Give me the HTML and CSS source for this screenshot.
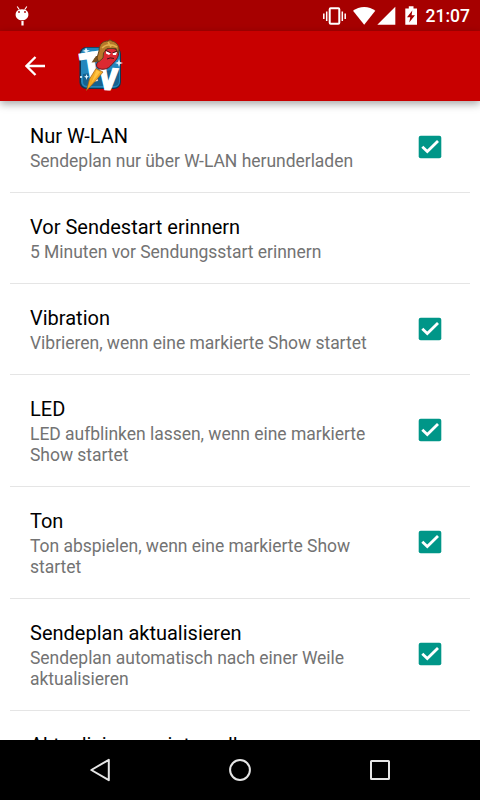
FILE: index.html
```html
<!DOCTYPE html>
<html lang="de">

<head>
    <meta charset="UTF-8">
    <meta name="viewport" content="width=device-width, initial-scale=1.0">
    <title>Einstellungen</title>
    <link rel="stylesheet" href="styles.css">
</head>

<body>
    <div class="statusbar">
        <svg class="debug" width="14" height="20" viewBox="0 0 14 20">
            <path d="M2.2 0.5 L4.4 3.8 M11.8 0.5 L9.6 3.8" stroke="#fff" stroke-width="1.1" />
            <path d="M1 6.5 C2.5 2.2 11.5 2.2 13 6.5 C14.6 11 11 14.2 7 14.2 C3 14.2 -0.6 11 1 6.5 Z" fill="#fff" />
            <circle cx="4" cy="6" r="0.9" fill="#a60000" />
            <circle cx="10" cy="6" r="0.9" fill="#a60000" />
            <path d="M7.5 15 V19.5" stroke="#fff" stroke-width="2.2" />
        </svg>
        <svg class="icons" width="96" height="20" viewBox="0 0 96 20">
            <!-- vibrate -->
            <rect x="6.7" y="2.2" width="9.6" height="15.6" rx="1" fill="none" stroke="#fff" stroke-width="2" />
            <path d="M3.7 5.5 V15 M0.8 7.5 V13 M19.3 5.5 V15 M22.2 7.5 V13" stroke="#fff" stroke-width="1.5" />
            <!-- wifi -->
            <path d="M30 4.8 C36 -0.3 46.5 -0.3 52.3 4.8 L41.2 18.8 Z" fill="#fff" />
            <!-- signal -->
            <path d="M72.3 0.7 V18.7 H54.3 Z" fill="#fff" />
            <!-- battery -->
            <path d="M82.3 2.5 H85.8 V0.3 H90.5 V2.5 H94 V18.7 H82.3 Z" fill="#fff" />
            <path d="M89.3 4.5 L84 11.3 H87.3 L86.2 16.5 L92 9.3 H88.6 Z" fill="#a60000" />
        </svg>
        <span class="clock">21:07</span>
    </div>

    <header class="toolbar">
        <svg class="back" width="20" height="20" viewBox="0 0 20 20">
            <path d="M20 10 H2 M10.5 1 L1.5 10 L10.5 19" fill="none" stroke="#fff" stroke-width="2.3" />
        </svg>
        <svg class="logo" width="46" height="54" viewBox="0 0 46 54">
            <rect x="1.4" y="8" width="41.6" height="42" rx="7" fill="#14344f" />
            <rect x="3" y="8.8" width="39" height="40" rx="6" fill="#2387bd" />
            <path d="M5 35 V43 Q5 47 10 47 H36 Q41 47 41 42 V30 Z" fill="#17628f" />
            <path d="M8 8.5 L9.2 11 L12 11.5 L9.2 12.7 L8.2 15.5 L7 12.7 L4.5 12 L7 11 Z M41 20 L42 23 L45 24 L42 25 L41 28 L40 25 L37 24 L40 23 Z M8.5 35 L9.2 37 L11 37.8 L9.2 38.6 L8.5 41 L7.8 38.6 L6 37.8 L7.8 37 Z" fill="#e4f6ff" />
            <circle cx="3" cy="38" r="1" fill="#fff" />
            <text class="letter" font-size="40" transform="translate(5 43.5) rotate(-9) scale(0.88 1)">T</text>
            <text class="letter" font-size="30" transform="translate(20.5 50) rotate(4) scale(0.92 1)">V</text>
            <!-- flame -->
            <path d="M18 29.5 L25 33 L17 42.5 L8.5 51.5 L11.5 40 Z" fill="#f5aa24" stroke="#9a5b18" stroke-width="0.7" />
            <path d="M18.5 31 L22 33 L13.5 44 Z" fill="#ffc444" />
            <!-- rocket sausage -->
            <path d="M19 23 L13.5 23.5 L18 17 L23 17 Z" fill="#76501f" />
            <path d="M25 12 C30 8 40.5 8 40.5 15 C40 20 36 23 32.5 27 C28 32 18.5 31 18.5 26 C19 22 24 20 25 12 Z" fill="#dc2932" stroke="#65171d" stroke-width="1" />
            <path d="M21 12 C21 4 26 2 30 2 L32 0.8 L34 2 C38 3 41 6 41 10 L40.5 15 L38 9.5 L29 9.5 L25.5 14 L25 19 L20.5 23 L19 19 Z" fill="#b8792a" stroke="#60421c" stroke-width="1" />
            <path d="M24 9 Q30 3 39 8 M30 3 L33 8" fill="none" stroke="#e0b14d" stroke-width="1.5" />
            <path d="M28 12 L33 14 L31 16 L28 14.5 Z M34.5 14 L39 13 L38 16 H35 Z" fill="#fff" />
            <path d="M27 11 L33 14 M34.5 14 L39 12 M29 20 Q32 18 36 19.5" fill="none" stroke="#441014" stroke-width="1" />
        </svg>
    </header>

    <main class="settings">
        <div class="item">
            <div class="text">
                <div class="title">Nur W-LAN</div>
                <div class="summary">Sendeplan nur über W-LAN herunderladen</div>
            </div>
            <svg class="check" viewBox="0 0 24 24"><rect class="box" x="0.7" y="0.7" width="22.6" height="22.6" rx="2" /><path class="tick" d="M4.3 11.8 L9.3 16.6 L20 6" /></svg>
        </div>
        <div class="item">
            <div class="text">
                <div class="title">Vor Sendestart erinnern</div>
                <div class="summary">5 Minuten vor Sendungsstart erinnern</div>
            </div>
        </div>
        <div class="item">
            <div class="text">
                <div class="title">Vibration</div>
                <div class="summary">Vibrieren, wenn eine markierte Show startet</div>
            </div>
            <svg class="check" viewBox="0 0 24 24"><rect class="box" x="0.7" y="0.7" width="22.6" height="22.6" rx="2" /><path class="tick" d="M4.3 11.8 L9.3 16.6 L20 6" /></svg>
        </div>
        <div class="item">
            <div class="text">
                <div class="title">LED</div>
                <div class="summary">LED aufblinken lassen, wenn eine markierte Show startet</div>
            </div>
            <svg class="check" viewBox="0 0 24 24"><rect class="box" x="0.7" y="0.7" width="22.6" height="22.6" rx="2" /><path class="tick" d="M4.3 11.8 L9.3 16.6 L20 6" /></svg>
        </div>
        <div class="item">
            <div class="text">
                <div class="title">Ton</div>
                <div class="summary">Ton abspielen, wenn eine markierte Show startet</div>
            </div>
            <svg class="check" viewBox="0 0 24 24"><rect class="box" x="0.7" y="0.7" width="22.6" height="22.6" rx="2" /><path class="tick" d="M4.3 11.8 L9.3 16.6 L20 6" /></svg>
        </div>
        <div class="item">
            <div class="text">
                <div class="title">Sendeplan aktualisieren</div>
                <div class="summary">Sendeplan automatisch nach einer Weile aktualisieren</div>
            </div>
            <svg class="check" viewBox="0 0 24 24"><rect class="box" x="0.7" y="0.7" width="22.6" height="22.6" rx="2" /><path class="tick" d="M4.3 11.8 L9.3 16.6 L20 6" /></svg>
        </div>
        <div class="item">
            <div class="text">
                <div class="title">Aktualisierungsintervall</div>
            </div>
        </div>
    </main>

    <nav class="navbar">
        <svg width="24" height="26" viewBox="0 0 24 26">
            <path d="M20.8 2.8 V23.2 L3.3 13 Z" />
        </svg>
        <svg width="24" height="26" viewBox="0 0 24 26">
            <circle cx="12" cy="13" r="9.9" />
        </svg>
        <svg width="24" height="26" viewBox="0 0 24 26">
            <rect x="3" y="4" width="18" height="18" rx="0.5" />
        </svg>
    </nav>
</body>

</html>
```
FILE: styles.css
```css
* {
    box-sizing: border-box;
}

body {
    margin: 0;
    width: 480px;
    height: 800px;
    display: flex;
    flex-direction: column;
    overflow: hidden;
    background-color: #fff;
    font-family: Roboto, "Liberation Sans", sans-serif;
}

svg {
    display: block;
    flex: none;
}

.statusbar {
    height: 31px;
    flex: none;
    display: flex;
    align-items: flex-start;
    padding: 6px 10px 0 15px;
    background-color: #a60000;
    color: #fff;
}

.icons {
    margin-left: auto;
    margin-right: 7px;
}

.clock {
    font-size: 17.5px;
    font-weight: 500;
    line-height: 21px;
}

.toolbar {
    height: 70px;
    flex: none;
    display: flex;
    align-items: center;
    padding-left: 25px;
    background-color: #c80000;
    box-shadow: 0 3px 8px rgba(0, 0, 0, 0.35);
    z-index: 1;
}

.logo {
    margin-left: 33px;
}

.letter {
    font-family: Roboto, sans-serif;
    font-weight: 900;
    fill: #fff;
    stroke: #fff;
    stroke-width: 1.5px;
}

.settings {
    flex: 1;
    min-height: 0;
    overflow: hidden;
    padding: 0 10px;
    margin-top: 1px;
}

.item {
    display: flex;
    align-items: center;
    justify-content: space-between;
    padding: 22px 28px 20px 20px;
    border-bottom: 1px solid #e5e5e5;
}

.text {
    width: 350px;
}

.title {
    font-size: 20px;
    line-height: 24px;
    margin-bottom: 3px;
    color: #000;
}

.summary {
    font-size: 17.5px;
    line-height: 21px;
    letter-spacing: -0.03px;
    color: #737373;
}

.check {
    width: 24px;
    height: 24px;
    margin-bottom: 3px;
}

.box {
    fill: #009688;
}

.tick {
    fill: none;
    stroke: #fff;
    stroke-width: 2.8px;
}

.navbar {
    height: 60px;
    flex: none;
    display: flex;
    align-items: center;
    justify-content: center;
    gap: 116px;
    background-color: #000;
    fill: none;
    stroke: #e6e6e6;
    stroke-width: 2px;
    stroke-linejoin: round;
}
```
